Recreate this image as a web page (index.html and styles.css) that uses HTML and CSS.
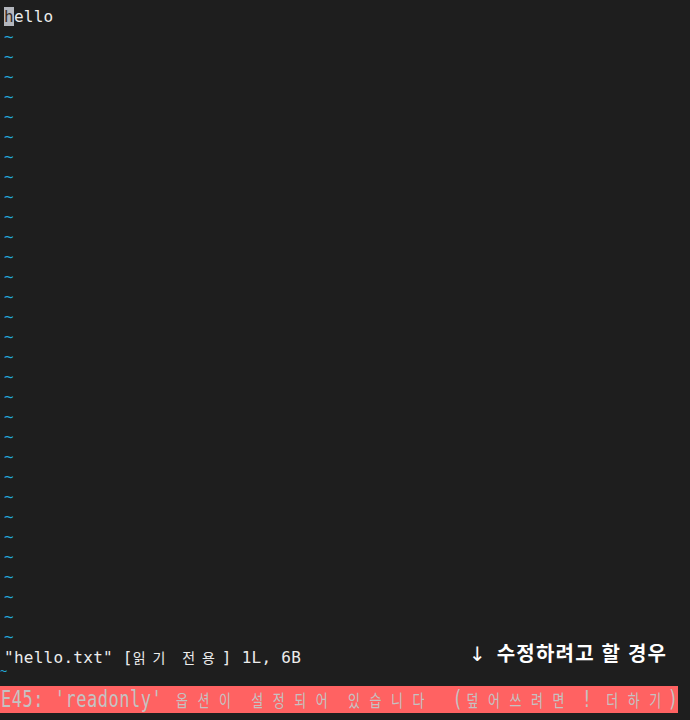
FILE: index.html
```html
<!doctype html>
<html lang="ko">
<head>
  <meta charset="UTF-8" />
  <meta name="viewport" content="width=device-width,initial-scale=1" />
  <title>hello.txt - vim</title>
  <link rel="stylesheet" href="styles.css">
</head>
<body>
  <main class="term">
    <div class="buf">
      <div class="row"><span class="cursor">h</span>ello</div>
      <div class="row tilde">~</div>
      <div class="row tilde">~</div>
      <div class="row tilde">~</div>
      <div class="row tilde">~</div>
      <div class="row tilde">~</div>
      <div class="row tilde">~</div>
      <div class="row tilde">~</div>
      <div class="row tilde">~</div>
      <div class="row tilde">~</div>
      <div class="row tilde">~</div>
      <div class="row tilde">~</div>
      <div class="row tilde">~</div>
      <div class="row tilde">~</div>
      <div class="row tilde">~</div>
      <div class="row tilde">~</div>
      <div class="row tilde">~</div>
      <div class="row tilde">~</div>
      <div class="row tilde">~</div>
      <div class="row tilde">~</div>
      <div class="row tilde">~</div>
      <div class="row tilde">~</div>
      <div class="row tilde">~</div>
      <div class="row tilde">~</div>
      <div class="row tilde">~</div>
      <div class="row tilde">~</div>
      <div class="row tilde">~</div>
      <div class="row tilde">~</div>
      <div class="row tilde">~</div>
      <div class="row tilde">~</div>
      <div class="row tilde">~</div>
      <div class="row tilde">~</div>
      <div class="row status">"hello.txt" [<span class="k">읽</span><span class="k">기</span> <span class="k">전</span><span class="k">용</span>] 1L, 6B</div>
    </div>

    <div class="gap"><span class="stray">~</span></div>

    <div class="err">
      <div class="err-line">E45: 'readonly' <span class="k">옵</span><span class="k">션</span><span class="k">이</span> <span class="k">설</span><span class="k">정</span><span class="k">되</span><span class="k">어</span> <span class="k">있</span><span class="k">습</span><span class="k">니</span><span class="k">다</span>  (<span class="k">덮</span><span class="k">어</span><span class="k">쓰</span><span class="k">려</span><span class="k">면</span> ! <span class="k">더</span><span class="k">하</span><span class="k">기</span>)</div>
    </div>

    <div class="note"><span class="arrow">↓</span>수정하려고 할 경우</div>
  </main>
</body>
</html>
```

FILE: styles.css
```css
:root{ --bg:#1e1e1e; --fg:#ececec; --tilde:#23a7d8; --red:#ff6262; --errfg:#c4c2c2; }
*{ box-sizing:border-box; }
body{
  margin:0; background:var(--bg);
  width:690px; height:720px; overflow:hidden;
}
.term{ position:relative; height:720px; }

.buf{
  --cell:9.9px;
  padding:7px 0 0 4px;
  font-family:"DejaVu Sans Mono", monospace;
  font-size:16px;
  letter-spacing:.27px;
  color:var(--fg);
}
.row{ height:20px; line-height:20px; white-space:pre; }
.tilde{ color:var(--tilde); }
.cursor{ background:#b3b6bd; color:#3a2a1e; }

.k{
  display:inline-block;
  width:calc(var(--cell) * 2);
  font-family:"Noto Sans CJK KR", sans-serif;
  font-size:14px;
  letter-spacing:0;
}

.gap{ height:19px; position:relative; }
.stray{
  position:absolute; left:0; top:-2px;
  font-family:"DejaVu Sans Mono", monospace;
  font-size:12px; line-height:12px;
  color:var(--tilde);
}

.err{
  --cell:10.75px;
  width:678px; height:27px;
  background:var(--red);
  display:flex; align-items:center;
  overflow:hidden;
}
.err-line{
  white-space:pre;
  font-family:"DejaVu Sans Mono", monospace;
  font-size:17px;
  line-height:20px;
  letter-spacing:.52px;
  color:var(--errfg);
  transform:scaleY(1.33);
  transform-origin:left center;
  padding-left:1px;
}
.err-line .k{ font-size:13px; padding-left:3px; }

.note{
  position:absolute; left:469px; top:638px;
  font-family:"Noto Sans CJK KR", sans-serif;
  font-weight:700;
  font-size:20px;
  letter-spacing:1.2px;
  color:#fff;
  white-space:pre;
}
.arrow{
  font-family:"DejaVu Sans", sans-serif;
  font-weight:400;
  margin-right:11px;
  letter-spacing:0;
}
```
